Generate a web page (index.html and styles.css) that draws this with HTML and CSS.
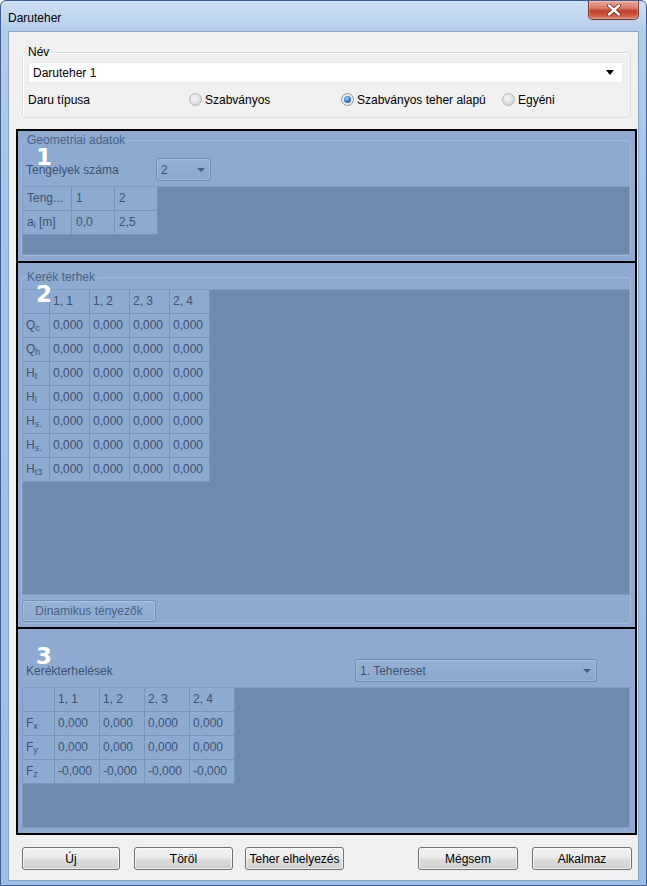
FILE: index.html
```html
<!DOCTYPE html>
<html lang="hu">
<head>
<meta charset="utf-8">
<title>Daruteher</title>
<link rel="stylesheet" href="styles.css">
</head>
<body>
<div class="window">
  <div class="titlebar">
    <span class="title">Daruteher</span>
    <div class="close">
      <svg width="16" height="12" viewBox="0 0 16 12"><path d="M3 1.5 L13 10.5 M13 1.5 L3 10.5" stroke="#6a2a20" stroke-width="4" stroke-linecap="round"/><path d="M3 1.5 L13 10.5 M13 1.5 L3 10.5" stroke="#ffffff" stroke-width="2.4" stroke-linecap="round"/></svg>
    </div>
  </div>
  <div class="client">
    <div class="name-group">
      <span class="legend">Név</span>
      <div class="combo">
        <span>Daruteher 1</span>
        <span class="arrow black"></span>
      </div>
      <div class="radio-row">
        <span class="rlabel">Daru típusa</span>
        <span class="ritem w1"><span class="radio"></span>Szabványos</span>
        <span class="ritem w2"><span class="radio on"></span>Szabványos teher alapú</span>
        <span class="ritem"><span class="radio"></span>Egyéni</span>
      </div>
    </div>

    <div class="annot">
      <section class="panel p1">
        <span class="num">1</span>
        <div class="pgroup">
          <span class="plegend">Geometriai adatok</span>
          <div class="prow r1">
            <span class="plabel">Tengelyek száma</span>
            <div class="pdrop d1"><span>2</span><span class="arrow"></span></div>
          </div>
          <div class="grid g1">
            <div class="tbl t1">
              <div class="c">Teng...</div><div class="c">1</div><div class="c">2</div>
              <div class="c">a<sub>i</sub> [m]</div><div class="c">0,0</div><div class="c">2,5</div>
            </div>
          </div>
        </div>
      </section>

      <section class="panel p2">
        <span class="num">2</span>
        <div class="pgroup">
          <span class="plegend">Kerék terhek</span>
          <div class="grid g2">
            <div class="tbl t2">
              <div class="c"></div><div class="c">1, 1</div><div class="c">1, 2</div><div class="c">2, 3</div><div class="c">2, 4</div>
              <div class="c h">Q<sub>c</sub></div><div class="c">0,000</div><div class="c">0,000</div><div class="c">0,000</div><div class="c">0,000</div>
              <div class="c h">Q<sub>h</sub></div><div class="c">0,000</div><div class="c">0,000</div><div class="c">0,000</div><div class="c">0,000</div>
              <div class="c h">H<sub>t</sub></div><div class="c">0,000</div><div class="c">0,000</div><div class="c">0,000</div><div class="c">0,000</div>
              <div class="c h">H<sub>l</sub></div><div class="c">0,000</div><div class="c">0,000</div><div class="c">0,000</div><div class="c">0,000</div>
              <div class="c h">H<sub>s.</sub></div><div class="c">0,000</div><div class="c">0,000</div><div class="c">0,000</div><div class="c">0,000</div>
              <div class="c h">H<sub>s.</sub></div><div class="c">0,000</div><div class="c">0,000</div><div class="c">0,000</div><div class="c">0,000</div>
              <div class="c h">H<sub>t3</sub></div><div class="c">0,000</div><div class="c">0,000</div><div class="c">0,000</div><div class="c">0,000</div>
            </div>
          </div>
          <button class="pbtn">Dinamikus tényezők</button>
        </div>
      </section>

      <section class="panel p3">
        <span class="num">3</span>
        <div class="prow r3">
          <span class="plabel l3">Kerékterhelések</span>
          <div class="pdrop d3"><span>1. Tehereset</span><span class="arrow"></span></div>
        </div>
        <div class="grid g3">
          <div class="tbl t3">
            <div class="c"></div><div class="c">1, 1</div><div class="c">1, 2</div><div class="c">2, 3</div><div class="c">2, 4</div>
            <div class="c h">F<sub>x</sub></div><div class="c">0,000</div><div class="c">0,000</div><div class="c">0,000</div><div class="c">0,000</div>
            <div class="c h">F<sub>y</sub></div><div class="c">0,000</div><div class="c">0,000</div><div class="c">0,000</div><div class="c">0,000</div>
            <div class="c h">F<sub>z</sub></div><div class="c">-0,000</div><div class="c">-0,000</div><div class="c">-0,000</div><div class="c">-0,000</div>
          </div>
        </div>
      </section>
    </div>

    <div class="buttons">
      <button class="btn b-uj">Új</button>
      <button class="btn b-torol">Töröl</button>
      <button class="btn b-teher">Teher elhelyezés</button>
      <button class="btn b-megsem">Mégsem</button>
      <button class="btn b-alk">Alkalmaz</button>
    </div>
  </div>
</div>
</body>
</html>
```
FILE: styles.css
```css
html, body { margin: 0; padding: 0; background: #ffffff; }
body { font-family: "Liberation Sans", Arial, sans-serif; font-size: 12px; color: #000; }

.window {
  width: 647px; height: 886px; box-sizing: border-box;
  display: flex; flex-direction: column;
  background: linear-gradient(to bottom, #cfe0f3 0, #b3cdec 30px, #a6c4ea 200px, #9cbde6 100%);
  border: 1px solid #3f5f92;
  border-radius: 6px 6px 0 0;
}
.titlebar { height: 30px; display: flex; align-items: flex-start; flex: none; }
.title { padding: 10px 0 0 7px; line-height: 14px; font-size: 12px; color: #000; }
.close {
  margin-left: auto; margin-right: 7px; width: 51px; height: 19px; box-sizing: border-box;
  border: 1px solid #6d3a33; border-top: none; border-radius: 0 0 5px 5px;
  background: linear-gradient(to bottom, #e9a899 0, #d77a66 40%, #c2412a 55%, #cf5a3f 80%, #e0876c 100%);
  display: flex; align-items: center; justify-content: center;
  box-shadow: inset 0 0 0 1px rgba(255,255,255,0.25);
}

.client {
  margin: 0 7px; height: 850px; box-sizing: border-box; flex: none;
  background: #f0f0f0; border: 1px solid #8aa2c3;
  display: flex; flex-direction: column;
}

/* Név group */
.name-group {
  position: relative; margin: 20px 7px 0 13px;
  border: 1px solid #d9dfe3; border-radius: 3px;
  padding: 9px 7px 9px 5px;
  box-shadow: inset 1px 1px 0 #fff;
}
.legend {
  position: absolute; top: -8px; left: 3px; padding: 0 2px;
  background: #f0f0f0; line-height: 14px;
}
.combo {
  height: 21px; box-sizing: border-box; background: #fff;
  border: 1px solid #e8ebee;
  display: flex; align-items: center; justify-content: space-between;
  padding: 0 8px 0 4px;
}
.arrow {
  width: 0; height: 0; border-left: 4px solid transparent; border-right: 4px solid transparent;
  border-top: 4px solid #4a5f80;
}
.arrow.black { border-top-color: #000; border-left-width: 4px; border-right-width: 4px; border-top-width: 5px; }
.radio-row { display: flex; align-items: center; margin-top: 8px; height: 17px; }
.rlabel { width: 161px; }
.ritem { display: flex; align-items: center; gap: 3px; }
.ritem.w1 { width: 152px; }
.ritem.w2 { width: 161px; }
.radio {
  width: 13px; height: 13px; box-sizing: border-box; border-radius: 50%;
  border: 1px solid #b8b8b8;
  background: radial-gradient(circle at 40% 40%, #f6f6f6 0, #dcdcdc 60%, #c9c9c9 100%);
  position: relative;
}
.radio.on { border-color: #8a9bb0; background: radial-gradient(circle, #f4f4f4 0, #e2e2e2 100%); }
.radio.on::after {
  content: ""; position: absolute; left: 2px; top: 2px; width: 7px; height: 7px; border-radius: 50%;
  background: radial-gradient(circle at 40% 35%, #9fd0f5 0, #2b6fb5 60%, #1e4f8c 100%);
}

/* Annotated sections */
.annot {
  margin: 11px 1px 0 7px; background: #000;
  padding: 2px; display: flex; flex-direction: column; gap: 2px;
}
.panel { position: relative; background: #8eaad0; color: #3d5272; box-sizing: border-box; }
.p1 { height: 130px; padding: 9px 4px 5px 3px; }
.p2 { height: 364px; padding: 14px 4px 3px 3px; }
.p3 { height: 204px; padding: 30px 5px 5px 4px; display: flex; flex-direction: column; }
.num {
  position: absolute; left: 18px; top: 15px; z-index: 2;
  font-family: "DejaVu Sans", sans-serif; font-weight: bold; font-size: 23px; line-height: 23px; color: #fff;
}
.p2 .num { top: 20px; }
.p3 .num { top: 16px; }

.pgroup {
  position: relative; border: 1px solid #a2b9d9; border-radius: 3px;
  display: flex; flex-direction: column;
}
.plegend {
  position: absolute; top: -8px; left: 3px; padding: 0 2px; line-height: 14px;
  background: #8eaad0; color: #4a6186;
}
.prow { display: flex; align-items: center; height: 23px; }
.r1 { margin-top: 17px; }
.plabel { padding-left: 4px; width: 134px; box-sizing: border-box; color: #3d5272; }
.l3 { width: 333px; padding-left: 4px; }
.pdrop {
  height: 23px; box-sizing: border-box; border: 1px solid #6f8cb3; border-radius: 3px;
  background: linear-gradient(to bottom, #97b1d5, #8ba8cf);
  display: flex; align-items: center; justify-content: space-between; padding: 0 5px 0 4px;
  color: #3d5272; box-shadow: inset 0 0 0 1px rgba(255,255,255,0.18);
}
.d1 { width: 55px; }
.d3 { width: 242px; }

.grid { background: #6e8aaf; border: 1px solid #7f9bc2; box-sizing: border-box; }
.g1 { margin-top: 5px; height: 69px; }
.g2 { margin-top: 11px; height: 306px; }
.g3 { margin-top: 5px; height: 141px; }

.tbl { display: grid; width: max-content; }
.t1 { grid-template-columns: 49px 43px 43px; }
.t2 { grid-template-columns: 27px 40px 40px 40px 40px; }
.t3 { grid-template-columns: 32px 45px 45px 45px 45px; }
.c {
  height: 24px; line-height: 23px; box-sizing: border-box; padding-left: 4px;
  background: #8eaad0; border-right: 1px solid #7894bb; border-bottom: 1px solid #7894bb;
  color: #3d5272; white-space: nowrap; overflow: hidden;
}
.t2 .c, .t3 .c { padding-left: 3px; }
.c.h { padding-left: 3px; }
sub { font-size: 9px; vertical-align: -2px; line-height: 0; }

.pbtn {
  margin: 5px 0 1px 0; width: 134px; height: 22px; box-sizing: border-box;
  font-family: inherit; font-size: 12px; color: #4a6186;
  border: 1px solid #7391bb; border-radius: 3px;
  background: linear-gradient(to bottom, #98b3d7, #8ca9cf);
  box-shadow: inset 0 0 0 1px rgba(255,255,255,0.2);
  padding: 0;
}

/* bottom buttons */
.buttons { display: flex; margin: 12px 0 0 13px; }
.btn {
  height: 23px; box-sizing: border-box; padding: 0;
  font-family: inherit; font-size: 12px; color: #000;
  border: 1px solid #707070; border-radius: 3px;
  background: linear-gradient(to bottom, #f2f2f2 0, #ebebeb 48%, #dddddd 52%, #cfcfcf 100%);
  box-shadow: inset 0 0 0 1px rgba(255,255,255,0.7);
}
.b-uj { width: 98px; }
.b-torol { width: 99px; margin-left: 14px; }
.b-teher { width: 99px; margin-left: 12px; }
.b-megsem { width: 100px; margin-left: 74px; }
.b-alk { width: 100px; margin-left: 14px; }
```
